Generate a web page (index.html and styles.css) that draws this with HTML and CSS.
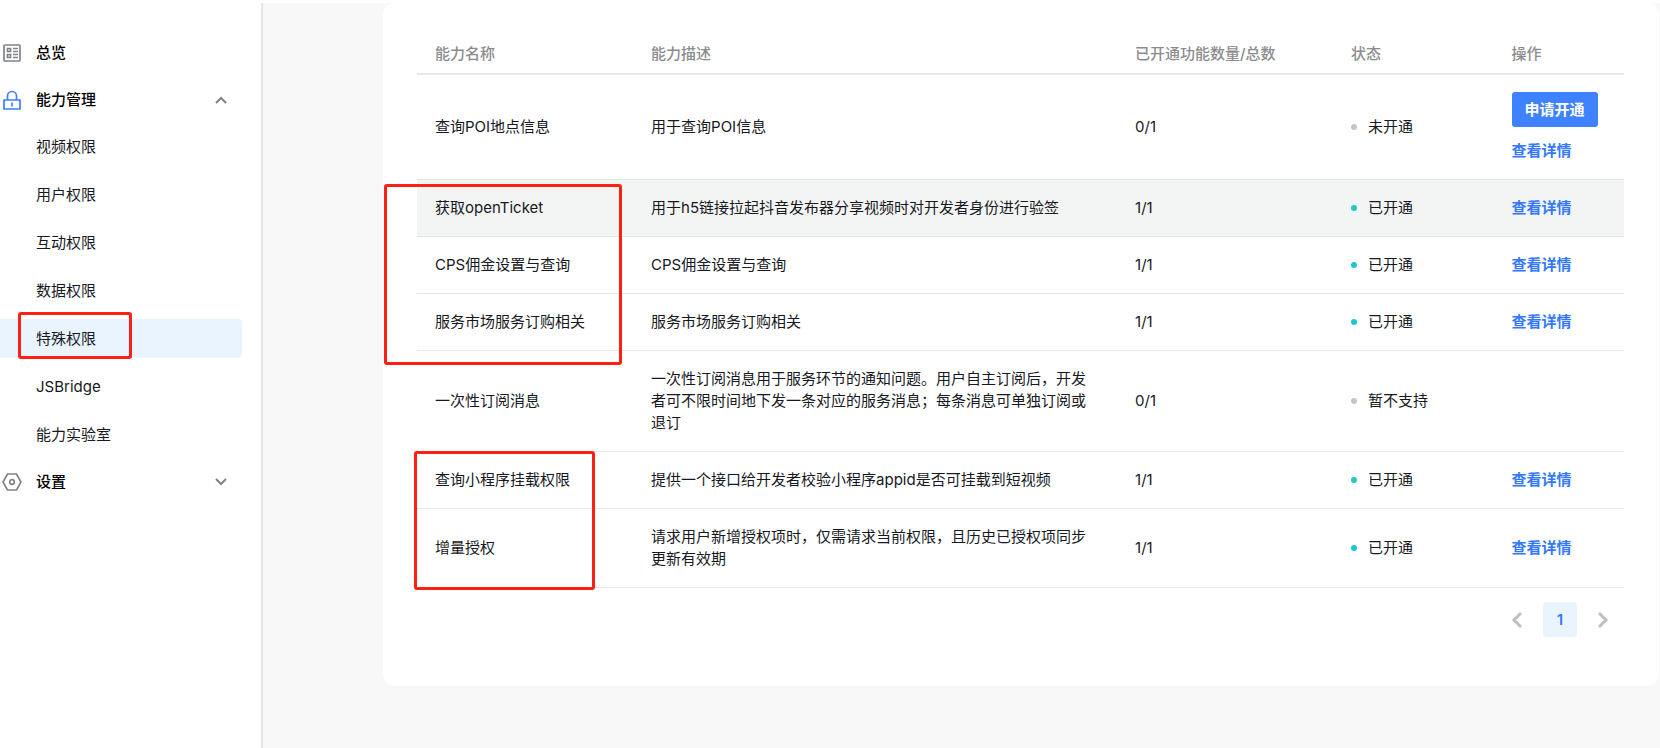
FILE: index.html
```html
<!DOCTYPE html>
<html lang="zh-CN">
<head>
  <meta charset="UTF-8">
  <meta name="viewport" content="width=device-width, initial-scale=1">
  <title>能力管理 - 特殊权限</title>
  <link rel="stylesheet" href="styles.css">
</head>
<body>

<div class="layout">
  <nav class="sidebar">
    <a href="#" class="nav-item">
      <svg class="nav-icon" viewBox="0 0 20 20">
        <rect x="2" y="2" width="16" height="16" rx="1"/>
        <path d="M5.500 5.500h3v3h-3zM5.500 11.500h3v3h-3zM11 5.500h5M11 8.500h5M11 11.500h5M11 14.500h5"/>
      </svg>
      <span>总览</span>
    </a>
    <a href="#" class="nav-item">
      <svg class="nav-icon active" viewBox="0 0 20 20">
        <path d="M2 10h16v9H2zM5.500 10V6a4.500 4.500 0 0 1 9 0v4M10 12.500v4"/>
      </svg>
      <span>能力管理</span>
      <svg class="arrow" viewBox="0 0 14 14"><path d="M2 10l5-5 5 5"/></svg>
    </a>
    <ul class="sub-menu">
      <li><a href="#">视频权限</a></li>
      <li><a href="#">用户权限</a></li>
      <li><a href="#">互动权限</a></li>
      <li><a href="#">数据权限</a></li>
      <li class="selected"><a href="#">特殊权限</a><div class="mark mark-menu"></div></li>
      <li><a href="#">JSBridge</a></li>
      <li><a href="#">能力实验室</a></li>
    </ul>
    <a href="#" class="nav-item">
      <svg class="nav-icon" viewBox="0 0 20 20">
        <path d="M5.500 2h9l4.500 8-4.500 8h-9L1 10z"/>
        <circle cx="10" cy="10" r="2.300"/>
      </svg>
      <span>设置</span>
      <svg class="arrow" viewBox="0 0 14 14"><path d="M2 4l5 5 5-5"/></svg>
    </a>
  </nav>

  <main class="content">
    <section class="panel">
      <table>
        <colgroup>
          <col class="col-name">
          <col class="col-desc">
          <col class="col-count">
          <col class="col-status">
          <col>
        </colgroup>
        <thead>
          <tr>
            <th>能力名称</th>
            <th>能力描述</th>
            <th>已开通功能数量/总数</th>
            <th>状态</th>
            <th>操作</th>
          </tr>
        </thead>
        <tbody>
          <tr>
            <td>查询POI地点信息</td>
            <td>用于查询POI信息</td>
            <td>0/1</td>
            <td><span class="status">未开通</span></td>
            <td><button class="apply">申请开通</button><a href="#" class="detail">查看详情</a></td>
          </tr>
          <tr class="hover">
            <td>获取openTicket</td>
            <td>用于h5链接拉起抖音发布器分享视频时对开发者身份进行验签</td>
            <td>1/1</td>
            <td><span class="status on">已开通</span></td>
            <td><a href="#" class="detail">查看详情</a></td>
          </tr>
          <tr>
            <td>CPS佣金设置与查询</td>
            <td>CPS佣金设置与查询</td>
            <td>1/1</td>
            <td><span class="status on">已开通</span></td>
            <td><a href="#" class="detail">查看详情</a></td>
          </tr>
          <tr>
            <td>服务市场服务订购相关</td>
            <td>服务市场服务订购相关</td>
            <td>1/1</td>
            <td><span class="status on">已开通</span></td>
            <td><a href="#" class="detail">查看详情</a></td>
          </tr>
          <tr>
            <td>一次性订阅消息</td>
            <td>一次性订阅消息用于服务环节的通知问题。用户自主订阅后，开发者可不限时间地下发一条对应的服务消息；每条消息可单独订阅或退订</td>
            <td>0/1</td>
            <td><span class="status">暂不支持</span></td>
            <td></td>
          </tr>
          <tr>
            <td>查询小程序挂载权限</td>
            <td>提供一个接口给开发者校验小程序appid是否可挂载到短视频</td>
            <td>1/1</td>
            <td><span class="status on">已开通</span></td>
            <td><a href="#" class="detail">查看详情</a></td>
          </tr>
          <tr>
            <td>增量授权</td>
            <td>请求用户新增授权项时，仅需请求当前权限，且历史已授权项同步更新有效期</td>
            <td>1/1</td>
            <td><span class="status on">已开通</span></td>
            <td><a href="#" class="detail">查看详情</a></td>
          </tr>
        </tbody>
      </table>

      <div class="pagination">
        <button aria-label="上一页"><svg viewBox="0 0 18 18"><path d="M13 2L6 9l7 7"/></svg></button>
        <button class="current">1</button>
        <button aria-label="下一页"><svg viewBox="0 0 18 18"><path d="M5 2l7 7-7 7"/></svg></button>
      </div>

      <div class="mark mark-service"></div>
      <div class="mark mark-auth"></div>
    </section>
  </main>
</div>

</body>
</html>
```
FILE: styles.css
```css
* {
  box-sizing: border-box;
}

body {
  margin: 0;
  padding-top: 3px;
  background: #ffffff;
  color: #161823;
  font-family: Inter, "Noto Sans CJK SC", sans-serif;
  font-size: 15px;
  line-height: 22px;
}

a {
  color: inherit;
  text-decoration: none;
}

button {
  border: none;
  font: inherit;
  cursor: pointer;
}

svg {
  fill: none;
  stroke: currentColor;
}

.layout {
  display: flex;
  min-height: calc(100vh - 3px);
}

/* sidebar */
.sidebar {
  flex: none;
  width: 263px;
  padding: 30px 19px 0 0;
  border-right: 2px solid #e4e6eb;
  display: flex;
  flex-direction: column;
  gap: 8px;
}

.nav-item {
  display: flex;
  align-items: center;
  height: 39px;
  padding: 0 14px 0 2px;
  color: #000000;
  font-weight: 500;
}

.nav-icon {
  width: 20px;
  height: 20px;
  margin-right: 14px;
  color: #80838a;
  stroke-width: 1.7;
}

.nav-icon.active {
  color: #3d7fff;
}

.arrow {
  width: 14px;
  height: 14px;
  margin-left: auto;
  color: #80838a;
  stroke-width: 2;
}

.sub-menu {
  list-style: none;
  margin: 0;
  padding: 0;
  display: flex;
  flex-direction: column;
  gap: 9px;
}

.sub-menu li {
  position: relative;
}

.sub-menu a {
  display: block;
  padding-left: 36px;
  line-height: 39px;
}

.selected {
  background: #e9f4ff;
  border-radius: 0 4px 4px 0;
}

/* content */
.content {
  flex: 1;
  padding: 0 1px 62px 120px;
  background: #f8f8f8;
}

.panel {
  position: relative;
  padding: 31px 35px 49px 34px;
  background: #ffffff;
  border-radius: 12px;
}

table {
  width: 100%;
  table-layout: fixed;
  border-collapse: separate;
  border-spacing: 0;
}

.col-name {
  width: 17.9%;
}

.col-desc {
  width: 40.1%;
}

.col-count {
  width: 17.9%;
}

.col-status {
  width: 13.3%;
}

th {
  padding: 9px 18px 8px;
  border-bottom: 2px solid #e8e8e9;
  color: #8c8c8f;
  font-weight: 500;
  text-align: left;
}

td {
  padding: 17px 18px;
  border-bottom: 1px solid #e6e7e8;
}

.hover td {
  background: #f3f5f5;
}

.status {
  display: flex;
  align-items: center;
}

.status::before {
  content: "";
  width: 6px;
  height: 6px;
  margin-right: 11px;
  border-radius: 50%;
  background: #c4c5c6;
}

.status.on::before {
  background: #1bc8cd;
}

.apply {
  display: block;
  height: 35px;
  margin-bottom: 13px;
  padding: 0 13px;
  border-radius: 3px;
  background: #3f82ff;
  color: #ffffff;
  font-weight: 600;
}

.detail {
  display: block;
  color: #3478ff;
  font-weight: 600;
}

.pagination {
  display: flex;
  justify-content: flex-end;
  gap: 9px;
  padding: 14px 4px 0 0;
}

.pagination button {
  display: flex;
  align-items: center;
  justify-content: center;
  width: 34px;
  height: 35px;
  padding: 0;
  border-radius: 4px;
  background: none;
  color: #c0c0c0;
}

.pagination svg {
  width: 18px;
  height: 18px;
  stroke-width: 3;
}

.pagination .current {
  background: #e9f4ff;
  color: #3478ff;
  font-weight: 600;
}

/* red highlight frames */
.mark {
  position: absolute;
  border: 3px solid #ff2014;
  border-radius: 3px;
  pointer-events: none;
}

.mark-menu {
  left: 18px;
  top: -7px;
  width: 114px;
  height: 47px;
}

.mark-service {
  left: 1px;
  top: 181px;
  width: 238px;
  height: 181px;
}

.mark-auth {
  left: 31px;
  top: 448px;
  width: 181px;
  height: 139px;
}
```
